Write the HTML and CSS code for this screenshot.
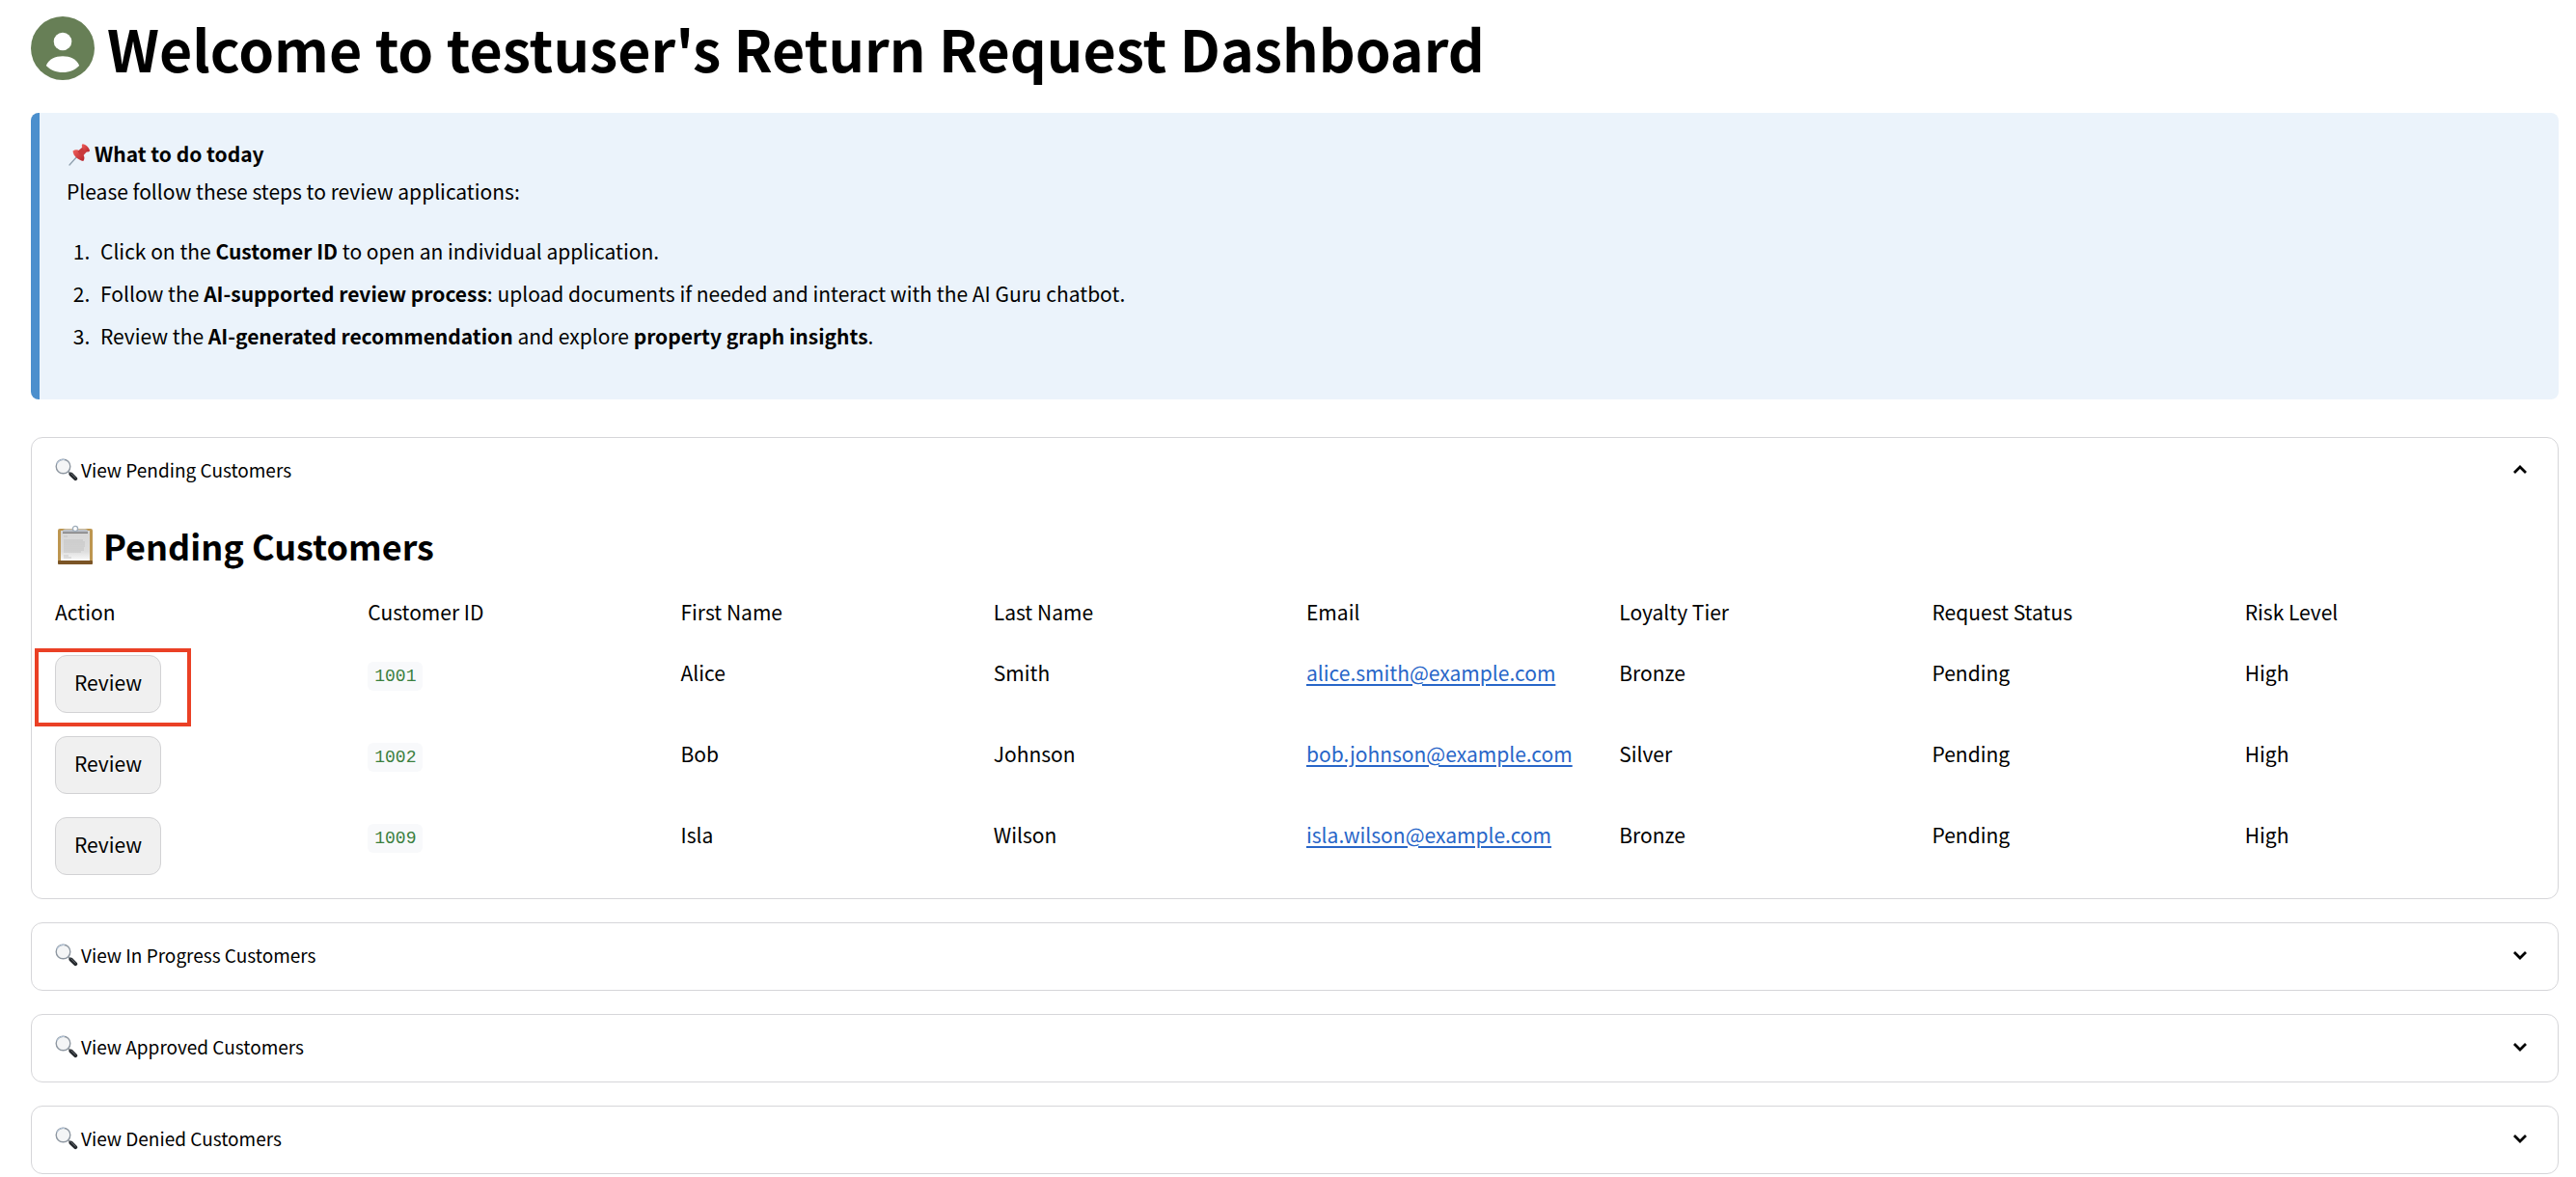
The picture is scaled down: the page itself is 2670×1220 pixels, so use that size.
FILE: index.html
```html
<!DOCTYPE html>
<html lang="en">
<head>
<meta charset="utf-8">
<title>Return Request Dashboard</title>
<link rel="stylesheet" href="styles.css">
</head>
<body>
<svg class="defs" aria-hidden="true">
  <defs>
    <linearGradient id="red" x1="0" y1="0" x2="1" y2="1">
      <stop offset="0" stop-color="#f0605c"/><stop offset="1" stop-color="#b5222a"/>
    </linearGradient>
    <linearGradient id="sheet" x1="0" y1="0" x2="0" y2="1">
      <stop offset="0" stop-color="#d6d6d6"/><stop offset="0.7" stop-color="#dedede"/><stop offset="1" stop-color="#fafafa"/>
    </linearGradient>
    <linearGradient id="clip" x1="0" y1="0" x2="0" y2="1">
      <stop offset="0" stop-color="#d3d8de"/><stop offset="0.7" stop-color="#a2a5aa"/><stop offset="1" stop-color="#6c6763"/>
    </linearGradient>
    <symbol id="search" viewBox="0 0 24 24">
      <path d="M14 14l3 3" stroke="#8a8f94" stroke-width="2"/>
      <path d="M16.500 16.500l4.700 4.700" stroke="#24282c" stroke-width="4" stroke-linecap="round"/>
      <path d="M16.500 15.700l4.500 4.500" stroke="#6b7076" stroke-width="1" stroke-linecap="round"/>
      <circle cx="8.500" cy="8.500" r="7.300" fill="#f4f5f6" stroke="#8d96a0" stroke-width="1.400"/>
      <path d="M2 6a7 7 0 0 1 8-4.600" fill="none" stroke="#b9cbe0" stroke-width="1"/>
    </symbol>
    <symbol id="chevron" viewBox="0 0 24 24">
      <path d="M6 9l6 6 6-6" fill="none" stroke="#000" stroke-width="2.800"/>
    </symbol>
  </defs>
</svg>
<main class="page">
  <header class="title">
    <svg class="avatar" viewBox="0 0 66 66" aria-hidden="true">
      <circle cx="33" cy="33" r="33" fill="#677f56"/>
      <circle cx="33" cy="26" r="9.300" fill="#fff"/>
      <path d="M15.800 51C19 44 25 41.300 33 41.300S47 44 50.200 51C46 55.500 40 58 33 58S20 55.500 15.800 51z" fill="#fff"/>
    </svg>
    <h1>Welcome to testuser's Return Request Dashboard</h1>
  </header>

  <section class="notice">
    <p class="notice-title">
      <svg class="pin" viewBox="0 0 24 24" aria-hidden="true">
        <path d="M10.500 13.500L2 23" stroke="#8fa0ae" stroke-width="1.300" stroke-linecap="round"/>
        <path d="M5.500 8.500C8 6.600 10.500 7 12.500 8.500L16 12c1.800 2.200 2 5 .3 6.900-2.800-.4-5.200-1.700-7.300-3.600C7 13.400 5.800 11.100 5.500 8.500z" fill="url(#red)"/>
        <path d="M10.800 8.600l4.700-4.200 4.700 4.700-4.100 4.500c-1.800.3-4.900-2.500-5.300-5z" fill="#c9393c"/>
        <path d="M15.500 1.300c2.800-.3 7.600 4.200 7.500 7.300-1.800 1.800-4.200.8-6-1S13.900 2.900 15.500 1.300z" fill="url(#red)"/>
      </svg>
      <strong>What to do today</strong>
    </p>
    <p>Please follow these steps to review applications:</p>
    <ol>
      <li>Click on the <strong>Customer ID</strong> to open an individual application.</li>
      <li>Follow the <strong>AI-supported review process</strong>: upload documents if needed and interact with the AI Guru chatbot.</li>
      <li>Review the <strong>AI-generated recommendation</strong> and explore <strong>property graph insights</strong>.</li>
    </ol>
  </section>

  <div class="panels">
    <details class="panel" open>
      <summary><svg class="search" aria-hidden="true"><use href="#search"/></svg><span>View Pending Customers</span><svg class="chevron" aria-hidden="true"><use href="#chevron"/></svg></summary>
      <div class="panel-body">
        <h2>
          <svg class="clipboard" viewBox="0 0 42 42" aria-hidden="true">
            <rect x="3" y="4" width="36" height="37" rx="2" fill="#bd9650"/>
            <rect x="3" y="37" width="36" height="4" rx="1" fill="#7b5526"/>
            <rect x="6" y="6" width="30" height="31" fill="url(#sheet)"/>
            <path d="M9 12h4M9 16h20M9 18h22M9 20h22M9 22h22M9 24h21M9 26h21M9 28h18M9 32h5M9 34h8" stroke="#bcbcbc" stroke-width="0.800"/>
            <path d="M8 9V6.500Q8 4.500 11 4.500h20q3 0 3 2V9z" fill="url(#clip)"/>
            <circle cx="21" cy="4" r="2.600" fill="#fff" stroke="#9fadba" stroke-width="1.300"/>
          </svg>
          <span>Pending Customers</span>
        </h2>
        <table>
          <thead>
            <tr><th>Action</th><th>Customer ID</th><th>First Name</th><th>Last Name</th><th>Email</th><th>Loyalty Tier</th><th>Request Status</th><th>Risk Level</th></tr>
          </thead>
          <tbody>
            <tr><td class="marked"><button type="button">Review</button></td><td><code>1001</code></td><td>Alice</td><td>Smith</td><td><a href="mailto:alice.smith@example.com">alice.smith@example.com</a></td><td>Bronze</td><td>Pending</td><td>High</td></tr>
            <tr><td><button type="button">Review</button></td><td><code>1002</code></td><td>Bob</td><td>Johnson</td><td><a href="mailto:bob.johnson@example.com">bob.johnson@example.com</a></td><td>Silver</td><td>Pending</td><td>High</td></tr>
            <tr><td><button type="button">Review</button></td><td><code>1009</code></td><td>Isla</td><td>Wilson</td><td><a href="mailto:isla.wilson@example.com">isla.wilson@example.com</a></td><td>Bronze</td><td>Pending</td><td>High</td></tr>
          </tbody>
        </table>
      </div>
    </details>
    <details class="panel">
      <summary><svg class="search" aria-hidden="true"><use href="#search"/></svg><span>View In Progress Customers</span><svg class="chevron" aria-hidden="true"><use href="#chevron"/></svg></summary>
    </details>
    <details class="panel">
      <summary><svg class="search" aria-hidden="true"><use href="#search"/></svg><span>View Approved Customers</span><svg class="chevron" aria-hidden="true"><use href="#chevron"/></svg></summary>
    </details>
    <details class="panel">
      <summary><svg class="search" aria-hidden="true"><use href="#search"/></svg><span>View Denied Customers</span><svg class="chevron" aria-hidden="true"><use href="#chevron"/></svg></summary>
    </details>
  </div>
</main>
</body>
</html>
```
FILE: styles.css
```css
*, *::after { box-sizing: border-box; }

body {
  margin: 0;
  background: #fff;
  color: #000;
  font-family: "Noto Sans CJK SC", "Noto Sans", sans-serif;
  font-size: 21px;
  line-height: 36px;
}

h1, h2, p, ol { margin: 0; }

svg { display: block; flex: none; }

.defs { position: absolute; width: 0; height: 0; }

.page { padding: 17px 18px 0 32px; }

.title { display: flex; align-items: center; gap: 13px; }
.title h1 { font-size: 59px; line-height: 66px; font-weight: 700; }
.avatar { width: 66px; height: 66px; }

.notice {
  margin: 34px 0 39px;
  padding: 23px 28px 46px;
  border-left: 9px solid #4b8fcd;
  border-radius: 8px;
  background: #ebf3fb;
  line-height: 39px;
}
.notice-title { display: flex; align-items: center; gap: 4px; }
.pin { width: 24px; height: 24px; margin-left: 1px; }
.notice ol {
  display: grid;
  gap: 5px;
  margin-top: 23px;
  padding-left: 29px;
}
.notice li { padding-left: 6px; }

.panels { display: grid; gap: 24px; }
.panel { border: 1px solid #d6d6d9; border-radius: 12px; }
.panel summary {
  display: flex;
  align-items: center;
  gap: 3px;
  padding: 17px 27px 20px 24px;
  font-size: 19px;
  line-height: 32px;
  list-style: none;
  cursor: pointer;
}
.search { width: 24px; height: 24px; }
.chevron { width: 24px; height: 24px; margin-left: auto; }
.panel[open] .chevron { transform: rotate(180deg); }

.panel-body { padding: 19px 24px 0; }
.panel-body h2 {
  display: flex;
  align-items: center;
  gap: 8px;
  font-size: 36px;
  line-height: 46px;
  font-weight: 700;
}
.clipboard { width: 42px; height: 42px; }

table {
  width: calc(100% + 24px);
  margin-top: 28px;
  border-collapse: collapse;
  table-layout: fixed;
}
th, td {
  padding: 0 24px 0 0;
  text-align: left;
  vertical-align: top;
  font-weight: 400;
  white-space: nowrap;
}
th { height: 63px; }
td { height: 84px; }

button {
  display: block;
  height: 60px;
  padding: 0 19px 4px;
  border: 1px solid #d2d2d4;
  border-radius: 12px;
  background: #f0f0f0;
  color: #000;
  font: inherit;
}

.marked { position: relative; }
.marked::after {
  content: "";
  position: absolute;
  top: -7px;
  left: -21px;
  width: 162px;
  height: 81px;
  border: 4px solid #ea4025;
  pointer-events: none;
}

code {
  padding: 5px 7px;
  border-radius: 6px;
  background: #f8f9fb;
  color: #3b803e;
  font-family: "Liberation Mono", monospace;
  font-size: 18px;
}

a { color: #2866c8; text-decoration-thickness: 2px; text-underline-offset: 3px; }
```
